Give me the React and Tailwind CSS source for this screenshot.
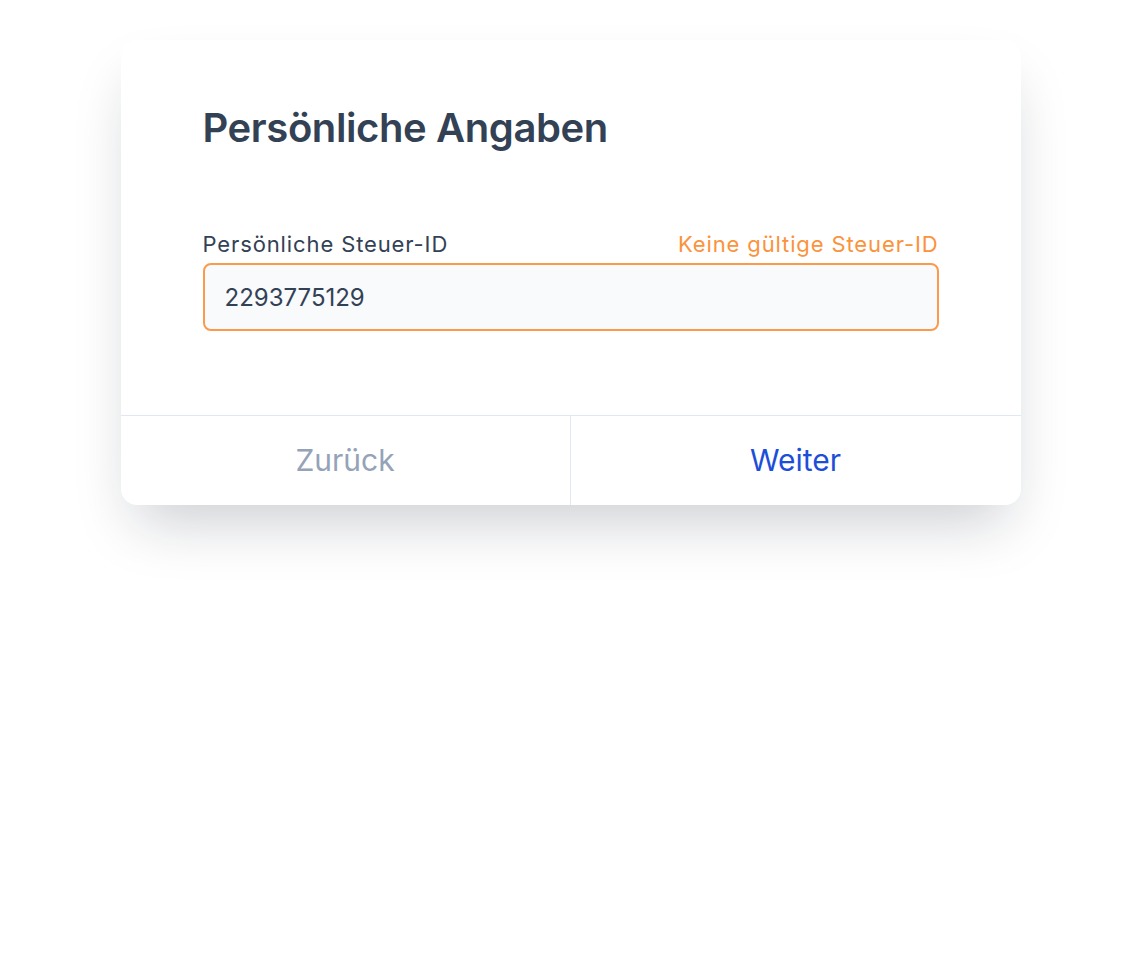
import { useState } from "react";

const App = () => {
  const [taxId, setTaxId] = useState("2293775129");

  return (
    <div className="min-h-screen bg-white pt-10 font-['Inter',sans-serif]">
      <div className="mx-auto w-[900px] rounded-[16px] bg-white shadow-[0_30px_60px_-15px_rgba(15,23,42,0.22)]">
        {/* Form body */}
        <div className="px-[82px] pt-[68px] pb-[84px]">
          <h1 className="text-[40px] font-semibold leading-none tracking-[-0.01em] text-[#334155]">
            Persönliche Angaben
          </h1>

          <div className="mt-[85px]">
            <div className="flex items-end justify-between text-[22px] leading-none tracking-[0.04em]">
              <label className="text-[#334155]">Persönliche Steuer-ID</label>
              <span className="text-[#fb923c]">Keine gültige Steuer-ID</span>
            </div>
            <input
              value={taxId}
              onChange={(e) => setTaxId(e.target.value)}
              className="mt-2 h-[68px] w-full rounded-[8px] border-2 border-[#fb9a4b] bg-[#f8fafc] px-5 text-[24px] text-[#334155] outline-none"
            />
          </div>
        </div>

        {/* Footer actions */}
        <div className="grid h-[90px] grid-cols-2 border-t border-[#e2e8f0]">
          <button className="border-r border-[#e2e8f0] text-[30px] text-[#94a3b8]">
            Zurück
          </button>
          <button className="text-[30px] text-[#1d4ed8]">Weiter</button>
        </div>
      </div>
    </div>
  );
};

export default App;
